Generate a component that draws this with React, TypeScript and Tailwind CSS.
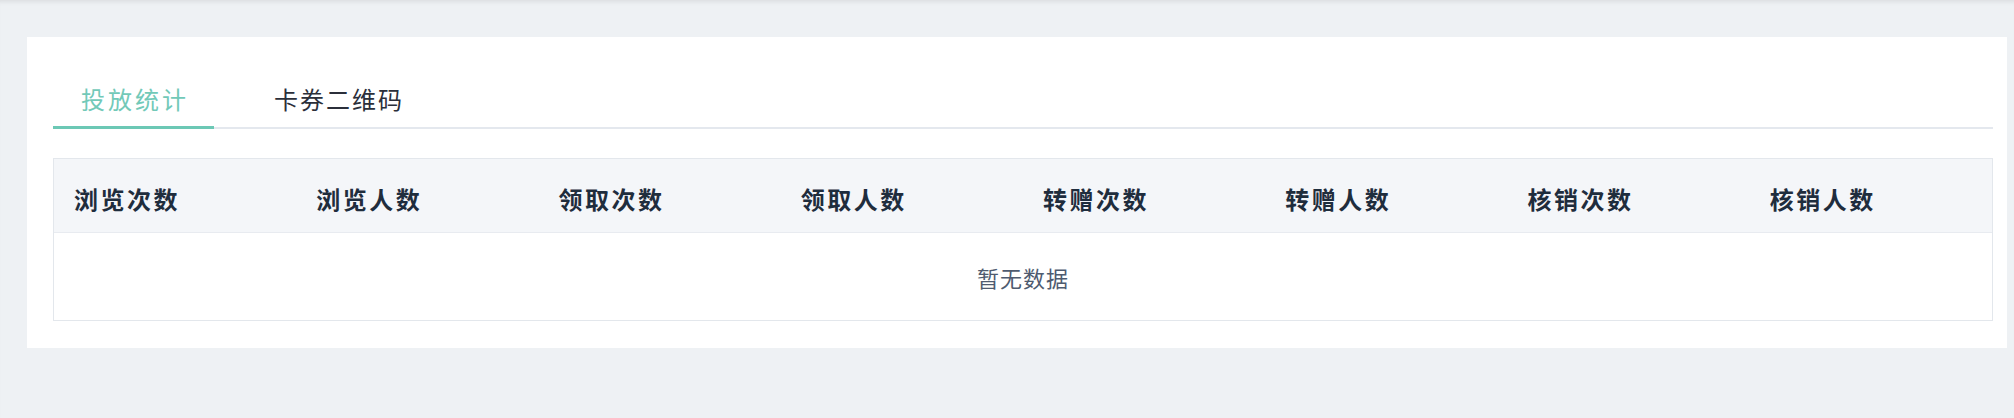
const columns = [
  "浏览次数",
  "浏览人数",
  "领取次数",
  "领取人数",
  "转赠次数",
  "转赠人数",
  "核销次数",
  "核销人数",
];

const cjk = "font-['Noto_Sans_CJK_SC','Noto_Sans',sans-serif]";

export default function App() {
  return (
    <div
      className={`min-h-screen bg-[#eef1f4] pt-[37px] pl-[27px] pr-[7px] shadow-[inset_0_5px_4px_-3px_rgba(0,0,0,0.08)] ${cjk}`}
    >
      <div className="bg-white pt-[32px] pb-[27px] pl-[26px] pr-[14px]">
        {/* Tabs */}
        <div className="flex border-b-2 border-[#e4e8ee]">
          <div className="-mb-[2px] w-[161px] border-b-[3px] border-[#6cc8b5] pl-[3px] pt-[18px] pb-[15px] text-center text-[24px] leading-[24px] tracking-[3px] text-[#72c9b8]">
            投放统计
          </div>
          <div className="-mb-[2px] ml-[30px] border-b-[3px] border-transparent px-[30px] pt-[18px] pb-[15px] text-[24px] leading-[24px] tracking-[2px] text-[#2b2f3a]">
            卡券二维码
          </div>
        </div>

        {/* Table */}
        <div className="mt-[29px] border border-[#e3e7ec]">
          <div className="grid h-[74px] grid-cols-8 border-b border-[#e8ebf0] bg-[#f4f6f9]">
            {columns.map((c) => (
              <div
                key={c}
                className="pl-[20px] pt-[28px] text-[24px] leading-[24px] font-bold tracking-[2.5px] text-[#1f2d3d]"
              >
                {c}
              </div>
            ))}
          </div>
          <div className="flex h-[87px] items-center justify-center text-[22px] leading-[22px] tracking-[1px] text-[#4e5b70]">
            暂无数据
          </div>
        </div>
      </div>
    </div>
  );
}
